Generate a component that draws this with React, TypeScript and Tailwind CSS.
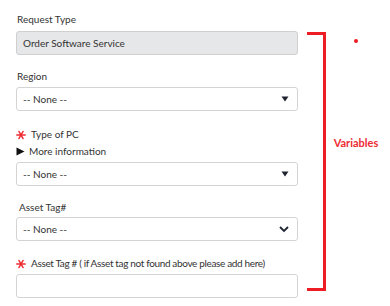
import React from 'react';

const font = { fontFamily: 'Lato, "Noto Sans", sans-serif' };

const Caret = () => (
  <svg width="8" height="6" viewBox="0 0 8 6" className="shrink-0">
    <path d="M0.5 0.5 H7.5 L4 5.5 Z" fill="#1f2430" />
  </svg>
);

const Chevron = () => (
  <svg width="10" height="7" viewBox="0 0 10 7" className="shrink-0">
    <path d="M1 1 L5 5 L9 1" fill="none" stroke="#1f2430" strokeWidth="1.8" />
  </svg>
);

const Asterisk = () => (
  <svg width="10" height="10" viewBox="0 0 10 10" className="shrink-0 mr-[5px]">
    <g stroke="#ee2a2f" strokeWidth="1.4" strokeLinecap="round">
      <path d="M0.8 5 H9.2" />
      <path d="M2.9 1.4 L7.1 8.6" />
      <path d="M7.1 1.4 L2.9 8.6" />
    </g>
  </svg>
);

const Select: React.FC<{ chevron?: boolean; className?: string }> = ({ chevron, className = '' }) => (
  <div
    className={`h-[24px] flex items-center justify-between pl-[6px] pr-[8px] border border-[#d4d4d4] rounded-[3px] bg-white ${className}`}
  >
    <span className="text-[10px] text-[#333]">-- None --</span>
    {chevron ? <Chevron /> : <Caret />}
  </div>
);

const App: React.FC = () => {
  return (
    <div className="w-[390px] h-[306px] bg-white flex" style={font}>
      {/* Form */}
      <div className="ml-[16px] w-[282px] pt-[13px] flex flex-col text-[10px] leading-[13px] text-[#333]">
        <div className="pl-[1px]">Request Type</div>
        <div className="mt-[5px] h-[24px] flex items-center pl-[6px] bg-[#e6e7e9] border border-[#cfcfcf] rounded-[3px]">
          Order Software Service
        </div>

        <div className="mt-[15px] pl-[1px]">Region</div>
        <Select className="mt-[4px]" />

        <div className="mt-[17px] flex items-center">
          <Asterisk />
          <span>Type of PC</span>
        </div>
        <div className="mt-[4px] flex items-center">
          <svg width="9" height="9" viewBox="0 0 9 9" className="mr-[4px]">
            <path d="M0.5 0.5 L8.5 4.5 L0.5 8.5 Z" fill="#111" />
          </svg>
          <span>More information</span>
        </div>
        <Select className="mt-[4px]" />

        <div className="mt-[15px] pl-[3px]">Asset Tag#</div>
        <Select chevron className="mt-[3px]" />

        <div className="mt-[16px] flex items-center">
          <Asterisk />
          <span className="tracking-[-0.35px]">Asset Tag # ( if Asset tag not found above please add here)</span>
        </div>
        <div className="mt-[4px] h-[24px] border border-[#d4d4d4] rounded-[3px] bg-white" />
      </div>

      {/* Bracket */}
      <div className="ml-[9px] mt-[32px] w-[19px] h-[259px] border-[3px] border-l-0 border-[#ee1c25]" />

      {/* Annotation */}
      <div className="flex-1 flex flex-col items-center">
        <div className="mt-[39px] ml-[-4px] w-[4px] h-[4px] rounded-full bg-[#ee1c25]" />
        <div className="mt-[92px] mr-[4px] text-[11px] font-bold text-[#ee2b33]">Variables</div>
      </div>
    </div>
  );
};

export default App;
